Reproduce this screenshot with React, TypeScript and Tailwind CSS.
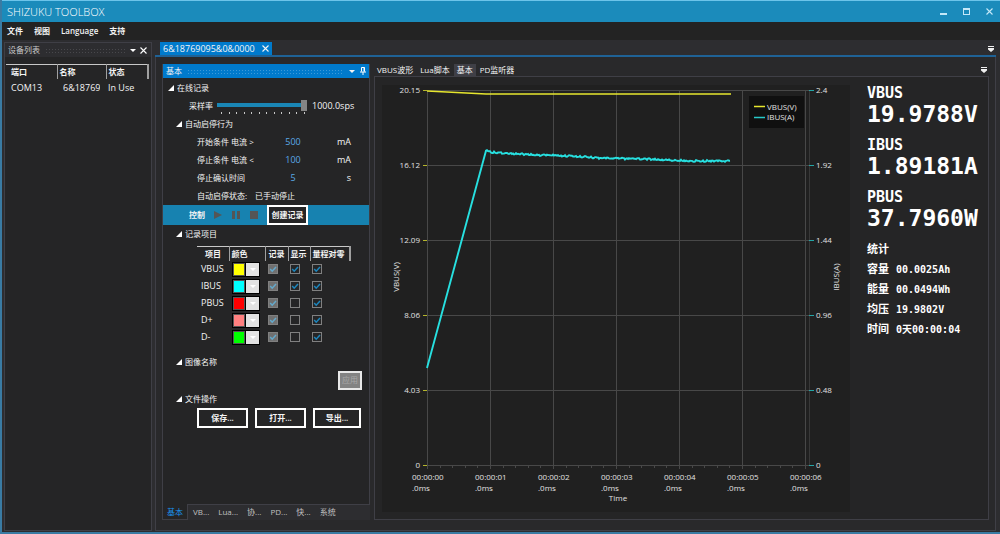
import { useState } from "react";
import type { ReactNode } from "react";

const menus = ["文件", "视图", "Language", "支持"];

const conditions = [
  { id: "start", label: "开始条件 电流 >", value: "500", unit: "mA" },
  { id: "stop", label: "停止条件 电流 <", value: "100", unit: "mA" },
  { id: "confirm", label: "停止确认时间", value: "5", unit: "s" },
];

const channels = [
  { name: "VBUS", color: "bg-[#ffff00]", show: true },
  { name: "IBUS", color: "bg-[#00ffff]", show: true },
  { name: "PBUS", color: "bg-[#ff0000]", show: false },
  { name: "D+", color: "bg-[#ff8080]", show: false },
  { name: "D-", color: "bg-[#00ff00]", show: false },
];

const sideTabs = ["基本", "VB...", "Lua...", "协...", "PD...", "快...", "系统"];
const docTabs = ["VBUS波形", "Lua脚本", "基本", "PD监听器"];

const readings = [
  { label: "VBUS", value: "19.9788V" },
  { label: "IBUS", value: "1.89181A" },
  { label: "PBUS", value: "37.7960W" },
];

const stats = [
  { label: "容量", value: "00.0025Ah" },
  { label: "能量", value: "00.0494Wh" },
  { label: "均压", value: "19.9802V" },
  { label: "时间", value: "0天00:00:04" },
];

const Triangle = () => (
  <svg width="6" height="3" viewBox="0 0 6 3" fill="currentColor" aria-hidden="true">
    <path d="M0 0h6L3 3z" />
  </svg>
);

const Cross = () => (
  <svg width="7" height="7" viewBox="0 0 7 7" stroke="currentColor" strokeWidth="1.1" aria-hidden="true">
    <path d="M.5 .5l6 6M6.5 .5l-6 6" />
  </svg>
);

const Overflow = () => (
  <svg width="6" height="6" viewBox="0 0 6 6" fill="#f0f0f0" aria-hidden="true">
    <path d="M0 0h6v1H0zM0 2h6v1.4L3 6 0 3.4z" />
  </svg>
);

const Dots = ({ blue }: { blue?: boolean }) => (
  <div
    className={`h-[5px] flex-1 bg-[size:3px_3px] ${
      blue
        ? "bg-[radial-gradient(#3c9ad9_0.6px,transparent_1px)]"
        : "bg-[radial-gradient(#48484c_0.6px,transparent_1px)]"
    }`}
  />
);

const Check = ({
  label,
  checked,
  disabled,
}: {
  label: string;
  checked: boolean;
  disabled?: boolean;
}) => (
  <label className="relative block size-[10px]">
    <input
      type="checkbox"
      aria-label={label}
      defaultChecked={checked}
      disabled={disabled}
      className="peer block size-[10px] appearance-none border border-[#808080] bg-[#252526] disabled:bg-[#707070]"
    />
    <svg
      viewBox="0 0 10 10"
      fill="none"
      strokeWidth="1.5"
      className="pointer-events-none absolute inset-0 hidden stroke-[#1d86bd] peer-checked:block peer-disabled:stroke-[#64a9cc]"
      aria-hidden="true"
    >
      <path d="M2.2 5l2 2.2L8 3" />
    </svg>
  </label>
);

const Group = ({ title, indent }: { title: string; indent?: boolean }) => (
  <button
    type="button"
    className={`flex h-[18px] items-center gap-[3px] ${indent ? "pl-[13px]" : "pl-[5px]"}`}
  >
    <svg width="6" height="6" viewBox="0 0 6 6" fill="#fff" aria-hidden="true">
      <path d="M6 0v6H0z" />
    </svg>
    {title}
  </button>
);

const OutlineButton = ({ children, className }: { children: ReactNode; className: string }) => (
  <button
    type="button"
    className={`flex h-5 items-center justify-center border-2 border-white bg-[#252526] font-semibold ${className}`}
  >
    {children}
  </button>
);

const TitleBar = () => (
  <header className="flex h-[22px] items-center border-t border-[#6cc4ea] bg-[#1b8bbb] pl-[5px] pr-[7px]">
    <h1 className="flex-1 text-[11px] font-light text-white">SHIZUKU TOOLBOX</h1>
    <div className="flex items-center gap-4 text-[#c4e8f8]">
      <button type="button" aria-label="Minimize">
        <svg width="7" height="7" viewBox="0 0 7 7" fill="currentColor">
          <path d="M0 5h7v2H0z" />
        </svg>
      </button>
      <button type="button" aria-label="Maximize">
        <svg width="7" height="7" viewBox="0 0 7 7" fill="currentColor">
          <path d="M0 0h7v7H0zM1 2v4h5V2z" fillRule="evenodd" />
        </svg>
      </button>
      <button type="button" aria-label="Close">
        <Cross />
      </button>
    </div>
  </header>
);

const DeviceList = () => (
  <aside className="flex w-[148px] shrink-0 flex-col border border-[#3f3f46] bg-[#252526]">
    <div className="flex h-[14px] items-center gap-[5px] bg-[#2d2d30] pl-[3px] pr-1 text-[#c8c8c8]">
      <h2>设备列表</h2>
      <Dots />
      <span className="flex items-center gap-1 text-white">
        <button type="button" aria-label="Options">
          <Triangle />
        </button>
        <button type="button" aria-label="Close panel">
          <Cross />
        </button>
      </span>
    </div>
    <table className="mt-[7px] ml-px w-[143px] table-fixed border-t border-[#c8c8c8] text-left">
      <thead>
        <tr className="h-[14px]">
          <th className="w-[51px] border-r border-[#a0a0a0] pl-[5px] font-semibold">端口</th>
          <th className="w-[49px] border-r border-[#a0a0a0] pl-[2px] font-semibold">名称</th>
          <th className="border-r-2 border-[#a0a0a0] pl-[2px] font-semibold">状态</th>
        </tr>
      </thead>
      <tbody className="text-[9px]">
        <tr className="h-[19px]">
          <td className="pl-[5px]">COM13</td>
          <td className="pl-[6px]">
            <div className="w-[37px] overflow-hidden">6&amp;187690</div>
          </td>
          <td className="whitespace-nowrap pl-[2px]">In Use</td>
        </tr>
      </tbody>
    </table>
  </aside>
);

const RecordTable = () => (
  <table className="mt-[3px] ml-[34px] w-[154px] table-fixed border-t border-[#c8c8c8] text-left">
    <thead>
      <tr className="h-[14px]">
        <th className="w-[32px] border-r border-[#a0a0a0] pl-2 font-semibold">项目</th>
        <th className="w-[36px] border-r border-[#a0a0a0] pl-[2px] font-semibold">颜色</th>
        <th className="w-[23px] border-r border-[#a0a0a0] pl-[3px] font-semibold">记录</th>
        <th className="w-[22px] border-r border-[#a0a0a0] pl-[2px] font-semibold">显示</th>
        <th className="border-r-2 border-[#a0a0a0] pl-[2px] font-semibold">量程对零</th>
      </tr>
    </thead>
    <tbody>
      {channels.map((ch) => (
        <tr key={ch.name} className="h-[17px]">
          <td className="pl-1 text-[9px]">{ch.name}</td>
          <td className="pl-[3px]">
            <button
              type="button"
              aria-label={`${ch.name} 颜色`}
              className="flex h-[15px] w-[28px] gap-px border border-black bg-black"
            >
              <span className={`h-[13px] flex-1 border border-[#555] ${ch.color}`} />
              <span className="flex h-[13px] w-[13px] items-center justify-center bg-[#e2e2e2] text-white">
                <Triangle />
              </span>
            </button>
          </td>
          <td className="pl-[3px]">
            <Check label={`${ch.name} 记录`} checked disabled />
          </td>
          <td className="pl-[2px]">
            <Check label={`${ch.name} 显示`} checked={ch.show} />
          </td>
          <td className="pl-[2px]">
            <Check label={`${ch.name} 量程对零`} checked />
          </td>
        </tr>
      ))}
    </tbody>
  </table>
);

const ControlPanel = () => {
  const [rate, setRate] = useState(11);
  const [tab, setTab] = useState(0);

  return (
    <section className="flex w-[208px] shrink-0 flex-col bg-[#2d2d30]">
      <div className="flex flex-1 flex-col border border-t-0 border-[#3f3f46] bg-[#252526]">
        <div className="flex h-[14px] items-center gap-[5px] bg-[#007acc] pl-[3px] pr-[3px]">
          <h2>基本</h2>
          <Dots blue />
          <button type="button" aria-label="Panel options">
            <Triangle />
          </button>
          <button type="button" aria-label="Pin">
            <svg width="6" height="8" viewBox="0 0 6 8" fill="none" stroke="#fff">
              <path d="M1.5 4.5v-4h3v4M0 5h6M3 5v3M4 .5v4" />
            </svg>
          </button>
        </div>

        <div className="mt-px flex flex-col">
          <Group title="在线记录" />
          <div className="flex h-[18px] items-center pl-[26px]">
            <label htmlFor="rate" className="w-[28px]">
              采样率
            </label>
            <div className="flex w-[90px] flex-col gap-px pt-px">
              <input
                id="rate"
                type="range"
                min={0}
                max={11}
                value={rate}
                onChange={(e) => setRate(Number(e.target.value))}
                className="h-[11px] w-full appearance-none bg-[linear-gradient(#1a86b5,#1a86b5)] bg-[size:100%_4px] bg-center bg-no-repeat [&::-webkit-slider-thumb]:h-[11px] [&::-webkit-slider-thumb]:w-[6px] [&::-webkit-slider-thumb]:appearance-none [&::-webkit-slider-thumb]:bg-[#858585]"
              />
              <div className="flex justify-between pl-1 pr-[2px]">
                {Array.from({ length: 12 }, (_, i) => (
                  <span key={i} className="h-[2px] w-px bg-[#c8c8c8]" />
                ))}
              </div>
            </div>
            <span className="ml-[5px] text-[9px]">1000.0sps</span>
          </div>

          <Group title="自动启停行为" indent />
          {conditions.map((c) => (
            <div key={c.id} className="flex h-[18px] items-center pl-[34px] pr-[18px]">
              <label htmlFor={c.id} className="w-[78px]">
                {c.label}
              </label>
              <input
                id={c.id}
                defaultValue={c.value}
                className="w-[36px] bg-transparent text-center text-[9px] text-[#5aa9e6]"
              />
              <span className="flex-1 text-right text-[9px]">{c.unit}</span>
            </div>
          ))}
          <div className="flex h-[18px] items-center gap-2 pl-[34px]">
            <span>自动启停状态:</span>
            <span>已手动停止</span>
          </div>

          <div className="flex h-5 items-center bg-[#1782b0] pl-[26px]">
            <span className="w-[25px] font-semibold">控制</span>
            <div className="flex w-[53px] items-center gap-[10px] text-[#555]">
              <button type="button" aria-label="播放">
                <svg width="8" height="8" viewBox="0 0 8 8" fill="currentColor">
                  <path d="M0 0l8 4-8 4z" />
                </svg>
              </button>
              <button type="button" aria-label="暂停">
                <svg width="8" height="8" viewBox="0 0 8 8" fill="currentColor">
                  <path d="M0 0h3v8H0zM5 0h3v8H5z" />
                </svg>
              </button>
              <button type="button" aria-label="停止">
                <svg width="8" height="8" viewBox="0 0 8 8" fill="currentColor">
                  <path d="M0 0h8v8H0z" />
                </svg>
              </button>
            </div>
            <OutlineButton className="w-[41px]">创建记录</OutlineButton>
          </div>

          <Group title="记录项目" indent />
          <RecordTable />

          <div className="mt-[7px] flex flex-col">
            <Group title="图像名称" indent />
            <button
              type="button"
              disabled
              className="mr-[7px] h-[19px] w-[24px] self-end border-2 border-[#e8e8e8] bg-[#838383] text-[#a8a8a8]"
            >
              应用
            </button>
            <Group title="文件操作" indent />
            <div className="flex gap-[7px] pl-[34px]">
              <OutlineButton className="w-[51px]">保存...</OutlineButton>
              <OutlineButton className="w-[51px]">打开...</OutlineButton>
              <OutlineButton className="w-[48px]">导出...</OutlineButton>
            </div>
          </div>
        </div>
      </div>

      <div className="-mt-px flex h-4 gap-px">
        {sideTabs.map((t, i) => (
          <button
            key={t}
            type="button"
            onClick={() => setTab(i)}
            className={`px-1 ${
              i === tab
                ? "border border-t-0 border-[#3f3f46] bg-[#252526] text-[#1a94ee]"
                : "text-[#c0c0c0]"
            }`}
          >
            {t}
          </button>
        ))}
      </div>
    </section>
  );
};

const STEP_X = 63;
const STEP_Y = 75;
const LEFT = 45;
const TOP = 5;
const BOTTOM = TOP + STEP_Y * 5;
const RIGHT = LEFT + STEP_X * 6;

const leftTicks = ["20.15", "16.12", "12.09", "8.06", "4.03", "0"];
const rightTicks = ["2.4", "1.92", "1.44", "0.96", "0.48", "0"];

// current settles slowly after the ramp, with a little measuring noise
const trend = [
  [104, 65],
  [108, 67],
  [120, 68],
  [158, 70],
  [190, 71],
  [218, 73],
  [262, 74],
  [310, 76],
  [349, 76],
];

const currentLine = () => {
  const points = ["45,283"];
  for (let i = 0; i < trend.length - 1; i++) {
    const [x0, y0] = trend[i];
    const [x1, y1] = trend[i + 1];
    for (let x = x0; x < x1; x++) {
      const noise = Math.sin(x * x * 2.3) * 0.6 + Math.sin(x * 5.1) * 0.3;
      const y = y0 + ((y1 - y0) * (x - x0)) / (x1 - x0) + noise;
      points.push(`${x},${y.toFixed(1)}`);
    }
  }
  return points.join(" ");
};

const Chart = () => (
  <svg
    viewBox="0 0 468 427"
    className="w-[468px] shrink-0 self-start bg-[#202020] text-[8px]"
    fill="#e0e0e0"
    role="img"
    aria-label="VBUS / IBUS"
  >
    <g stroke="#484848" shapeRendering="crispEdges">
      {leftTicks.map((_, i) => (
        <path key={i} d={`M${LEFT} ${TOP + i * STEP_Y + 0.5}H${RIGHT + 4}`} />
      ))}
      {Array.from({ length: 7 }, (_, i) => (
        <path key={i} d={`M${LEFT + i * STEP_X + 0.5} ${TOP}V${BOTTOM + 4}`} />
      ))}
      {Array.from({ length: 30 }, (_, i) => (
        <path key={i} d={`M${LEFT + (i * STEP_X) / 5 + 0.5} ${BOTTOM}v3`} />
      ))}
      <path d={`M${RIGHT + 4.5} ${TOP}V${BOTTOM}`} stroke="#383838" />
    </g>

    {leftTicks.map((t, i) => (
      <g key={i}>
        <path d={`M${LEFT - 4} ${TOP + i * STEP_Y + 0.5}h4`} stroke="#b5b52c" />
        <text x={LEFT - 7} y={TOP + i * STEP_Y + 3} textAnchor="end">
          {t}
        </text>
        <path d={`M${RIGHT + 4} ${TOP + i * STEP_Y + 0.5}h5`} stroke="#23a5a5" />
        <text x={RIGHT + 11} y={TOP + i * STEP_Y + 3}>
          {rightTicks[i]}
        </text>
      </g>
    ))}

    {Array.from({ length: 7 }, (_, i) => (
      <text key={i} y="395">
        <tspan x={LEFT + i * STEP_X - 15}>{`00:00:0${i}`}</tspan>
        <tspan x={LEFT + i * STEP_X - 15} dy="11">
          .0ms
        </tspan>
      </text>
    ))}
    <text x="236" y="416" textAnchor="middle">
      Time
    </text>
    <text transform="translate(17 192) rotate(-90)" textAnchor="middle">
      VBUS(V)
    </text>
    <text transform="translate(457 192) rotate(-90)" textAnchor="middle">
      IBUS(A)
    </text>

    <polyline points="45,6 104,9 349,9" fill="none" stroke="#e6e62e" strokeWidth="1.5" />
    <polyline points={currentLine()} fill="none" stroke="#27e0e0" strokeWidth="1.9" />

    <path d="M367 11h55v32h-55z" fill="#101010" />
    <path d="M372 21.5h11" stroke="#e6e62e" strokeWidth="1.5" />
    <path d="M372 32.5h11" stroke="#27c8c8" strokeWidth="1.5" />
    <text x="385" y="25">
      VBUS(V)
    </text>
    <text x="385" y="35">
      IBUS(A)
    </text>
  </svg>
);

const Readings = () => (
  <div className="-mt-px flex flex-1 flex-col font-['DejaVu_Sans_Mono','Noto_Sans_CJK_SC',monospace] font-bold text-white">
    {readings.map((r) => (
      <div key={r.label} className="mb-[10px]">
        <h3 className="text-[15px] leading-[18px]">{r.label}</h3>
        <p className="text-[23px] leading-6">{r.value}</p>
      </div>
    ))}
    <h3 className="text-[11px] leading-5">统计</h3>
    <dl>
      {stats.map((s) => (
        <div key={s.label} className="flex gap-[7px] leading-5">
          <dt className="text-[11px]">{s.label}</dt>
          <dd className="text-[10px]">{s.value}</dd>
        </div>
      ))}
    </dl>
  </div>
);

const DocumentView = () => {
  const [tab, setTab] = useState(2);

  return (
    <section className="flex min-w-0 flex-1 flex-col">
      <div className="flex h-[12px] items-center gap-px">
        {docTabs.map((t, i) => (
          <button
            key={t}
            type="button"
            onClick={() => setTab(i)}
            className={`h-full px-[3px] ${i === tab ? "bg-[#3f3f46]" : ""}`}
          >
            {t}
          </button>
        ))}
        <button type="button" aria-label="Tab list" className="ml-auto mr-[2px]">
          <Overflow />
        </button>
      </div>
      <div className="flex flex-1 gap-[17px] border border-[#3f3f46] bg-[#252526] pl-[7px] pt-2">
        <Chart />
        <Readings />
      </div>
    </section>
  );
};

export default function App() {
  return (
    <div className="flex min-h-screen flex-col border-b-2 border-l-2 border-[#3a7ba3] bg-[#2d2d30] font-['Open_Sans','Noto_Sans_CJK_SC',sans-serif] text-[8px] leading-[12px] text-[#f4f4f4]">
      <TitleBar />
      <nav className="flex h-[18px] items-center gap-[11px] bg-[#232323] pl-[5px] font-semibold">
        {menus.map((m) => (
          <button key={m} type="button">
            {m}
          </button>
        ))}
      </nav>

      <main className="flex flex-1 gap-[3px] pb-px pl-[2px] pr-1 pt-[2px]">
        <DeviceList />
        <div className="flex min-w-0 flex-1 flex-col">
          <div className="flex h-[15px] items-center justify-between border-b-2 border-[#1f6296] pl-[5px]">
            <div className="flex h-full items-center gap-[7px] bg-[#007acc] px-[3px] text-[9px]">
              <span>6&amp;18769095&amp;0&amp;0000</span>
              <button type="button" aria-label="Close tab">
                <Cross />
              </button>
            </div>
            <button type="button" aria-label="Document list" className="mr-[2px]">
              <Overflow />
            </button>
          </div>
          <div className="flex flex-1 gap-1 border border-t-0 border-[#3f3f46] bg-[#29292b] px-[6px] pb-[10px] pt-[7px]">
            <ControlPanel />
            <DocumentView />
          </div>
        </div>
      </main>
    </div>
  );
}
